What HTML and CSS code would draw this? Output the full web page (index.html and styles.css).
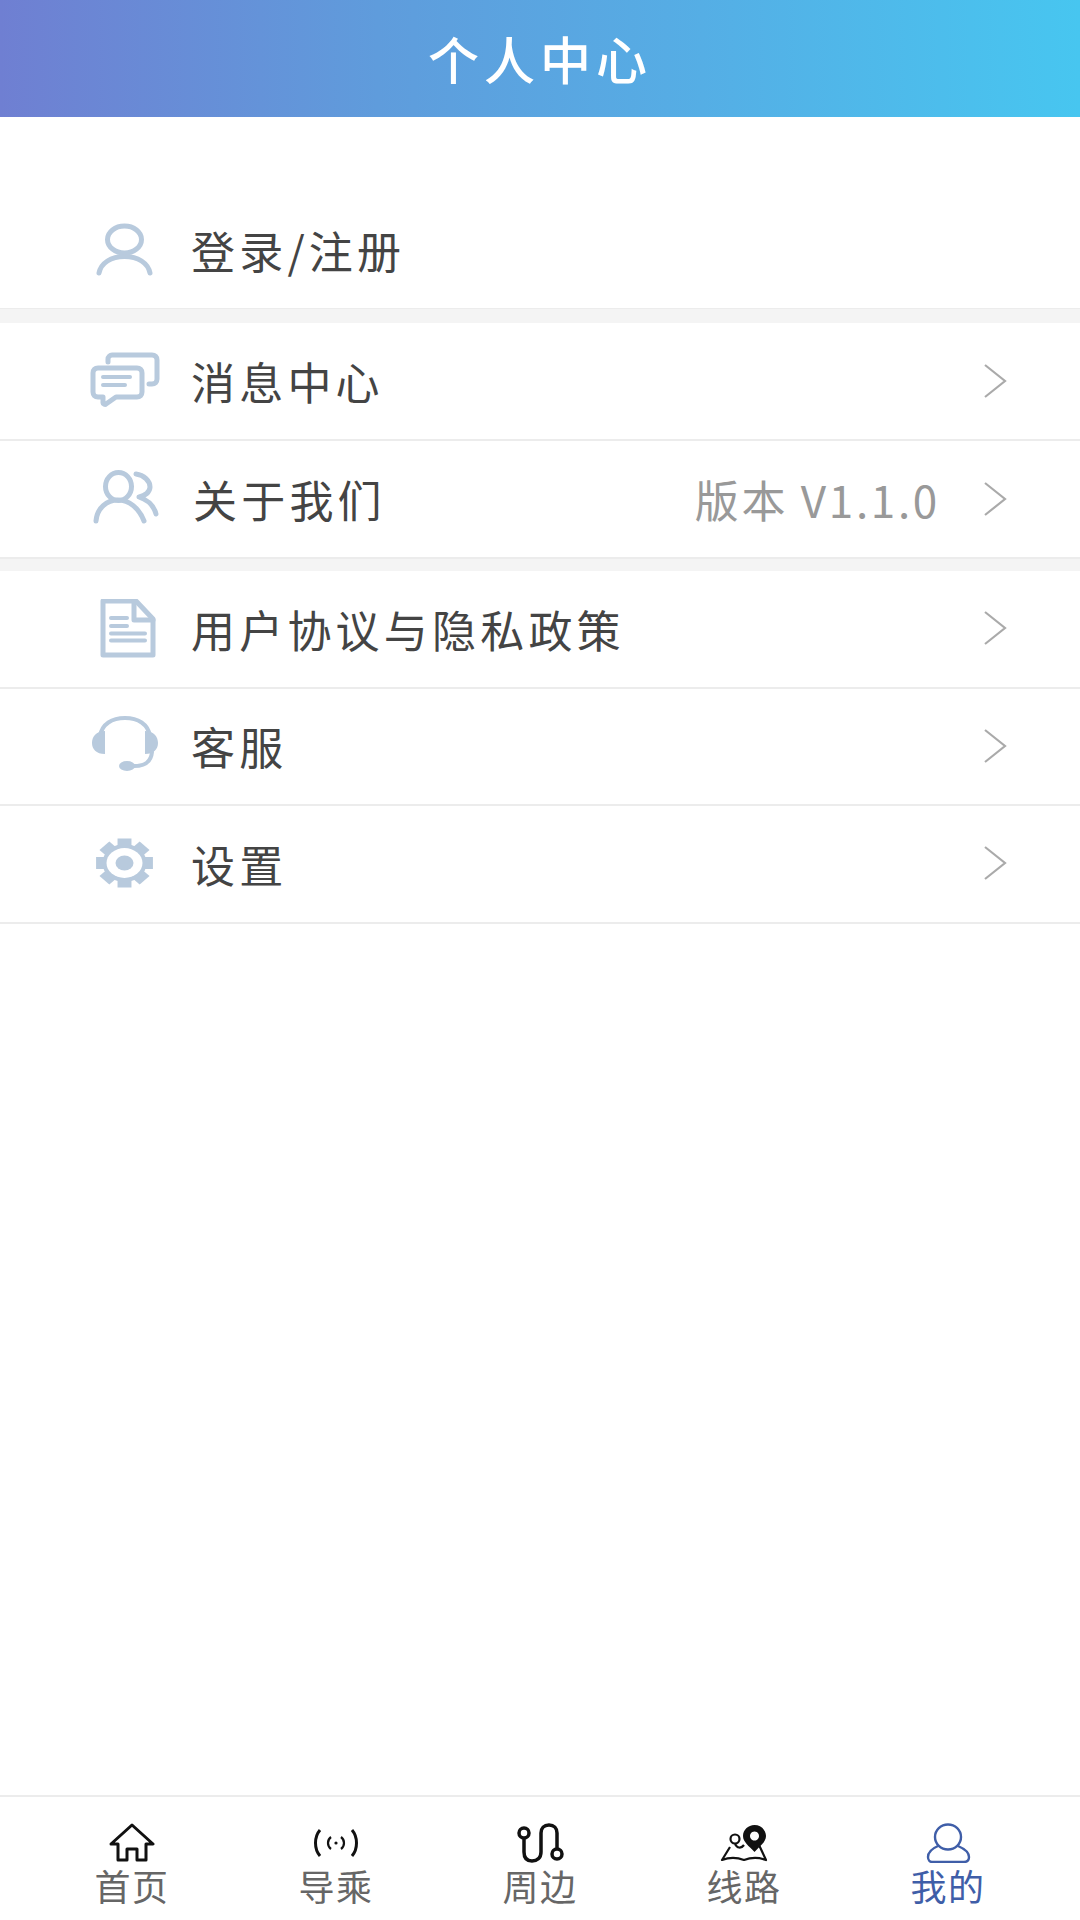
FILE: index.html
```html
<!DOCTYPE html>
<html lang="zh-CN">
<head>
    <meta charset="UTF-8">
    <meta name="viewport" content="width=device-width, initial-scale=1.0">
    <title>个人中心</title>
    <link rel="stylesheet" href="styles.css">
</head>
<body>
    <div class="page">
        <header class="header">个人中心</header>

        <main class="content">
            <div class="login">
                <svg class="icon" viewBox="0 0 72 60"><ellipse cx="34.5" cy="19.5" rx="17" ry="13.5"/><path d="M9 53C11 43 21 36.500 34.5 36.500S58 43 60 53"/></svg>
                <span class="title">登录/注册</span>
            </div>

            <div class="group group-top">
                <div class="row">
                    <svg class="icon" viewBox="0 0 72 60"><path d="M18 11V8c0-2 2-4 4-4h40c3 0 5 2 5 5v19c0 3-2 5-5 5h-3"/><path d="M8 17h39c3 0 5 2 5 5v19c0 3-2 5-5 5H26l-10 7c-1 1-3 0-3-1v-6H8c-3 0-5-2-5-5V22c0-3 2-5 5-5z"/><path class="thin" d="M13 26h27M13 34h22"/></svg>
                    <span class="title">消息中心</span>
                    <svg class="arrow" viewBox="0 0 24 36"><path d="M2 2l20 16L2 34"/></svg>
                </div>
                <div class="row">
                    <svg class="icon" viewBox="0 0 72 60"><ellipse cx="28.5" cy="17.5" rx="13" ry="14"/><path d="M6 52C7 39 17 31 28 31S49 39 54 52"/><path d="M46 5C54 6 60 12 60 18 60 23 55 27 49 28 58 31 64 37 66 45"/></svg>
                    <span class="title about">关于我们</span>
                    <span class="version">版本 V1.1.0</span>
                    <svg class="arrow" viewBox="0 0 24 36"><path d="M2 2l20 16L2 34"/></svg>
                </div>
            </div>

            <div class="group">
                <div class="row">
                    <svg class="icon" viewBox="0 0 72 60"><path d="M13 2h33l17 18v36H13z"/><path d="M44 2v19h19"/><path class="thin" d="M21 19h16M21 27h16M21 34.500h34M21 41.500h34"/></svg>
                    <span class="title">用户协议与隐私政策</span>
                    <svg class="arrow" viewBox="0 0 24 36"><path d="M2 2l20 16L2 34"/></svg>
                </div>
                <div class="row">
                    <svg class="icon" viewBox="0 0 72 60"><path class="thin" d="M10 20C12 8 22 2 35 2S58 8 60 20"/><path class="solid" d="M15 15v23C6 38 2 33 2 27s4-12 13-12zM55 15v23c9 0 13-5 13-11s-4-12-13-12z"/><path class="thin" d="M62 36C61 46 55 50 44 50"/><ellipse class="solid" cx="37" cy="50" rx="8" ry="5"/></svg>
                    <span class="title">客服</span>
                    <svg class="arrow" viewBox="0 0 24 36"><path d="M2 2l20 16L2 34"/></svg>
                </div>
                <div class="row">
                    <svg class="icon" viewBox="0 0 72 60">
                        <g class="solid" transform="translate(34.500 29) scale(1.16 1)">
                            <circle r="19"/>
                            <rect x="-6" y="-24.500" width="12" height="49"/>
                            <rect x="-6" y="-24.500" width="12" height="49" transform="rotate(45)"/>
                            <rect x="-6" y="-24.500" width="12" height="49" transform="rotate(90)"/>
                            <rect x="-6" y="-24.500" width="12" height="49" transform="rotate(135)"/>
                        </g>
                        <ellipse class="hole" cx="34.500" cy="29" rx="18" ry="15"/>
                        <ellipse class="solid" cx="34.500" cy="29" rx="9" ry="7.500"/>
                    </svg>
                    <span class="title">设置</span>
                    <svg class="arrow" viewBox="0 0 24 36"><path d="M2 2l20 16L2 34"/></svg>
                </div>
            </div>
        </main>

        <nav class="tabbar">
            <div class="tab">
                <svg class="tab-icon" viewBox="0 0 50 40"><path d="M11 21H4L25 2l21 19h-7v16H30V26H20v11H11z"/></svg>
                <span class="tab-label">首页</span>
            </div>
            <div class="tab">
                <svg class="tab-icon" viewBox="0 0 50 40"><path d="M9 7C3 14 3 26 9 33M41 7C47 14 47 26 41 33"/><path class="fine" d="M20 14C16 17 16 23 20 26M30 14C34 17 34 23 30 26"/><circle class="dot" cx="25" cy="20" r="1.600"/></svg>
                <span class="tab-label">导乘</span>
            </div>
            <div class="tab">
                <svg class="tab-icon route" viewBox="0 0 50 40"><circle cx="9" cy="10" r="5"/><circle cx="42" cy="31" r="5"/><path d="M9 15V29C9 35 12 38 17 38S26 35 26 29V10C26 5 29 2 34 2S42 5 42 10V26"/></svg>
                <span class="tab-label">周边</span>
            </div>
            <div class="tab">
                <svg class="tab-icon" viewBox="0 0 50 40"><path class="fine" d="M11 24L3 37C11 34 17 34 25 37 33 34 39 34 47 37L40 22"/><circle class="fine" cx="16" cy="16" r="4.500"/><path class="fine" d="M16 21C18 25 22 26 25 22"/><path class="dot" fill-rule="evenodd" d="M35.500 2C42 2 47 7 47 13 47 19 41 23 35.500 29 30 23 24 19 24 13 24 7 29 2 35.500 2zM35.500 8.500a4.500 4.500 0 1 0 .01 0z"/></svg>
                <span class="tab-label">线路</span>
            </div>
            <div class="tab active">
                <svg class="tab-icon" viewBox="0 0 50 40"><ellipse cx="25" cy="14" rx="13" ry="12.500"/><path d="M15 23C8 26 5 30 5 34 5 37 7 39 9 39H41C44 39 46 37 46 34 46 30 42 26 35 23"/></svg>
                <span class="tab-label">我的</span>
            </div>
        </nav>
    </div>
</body>
</html>
```

FILE: styles.css
```css
body {
    font-family: "Noto Sans CJK SC", "Liberation Sans", sans-serif;
    margin: 0;
    padding: 0;
    background-color: #fff;
}

.page {
    display: flex;
    flex-direction: column;
    width: 1080px;
    height: 1920px;
    overflow: hidden;
}

.header {
    height: 117px;
    line-height: 117px;
    flex-shrink: 0;
    text-align: center;
    color: #fff;
    font-size: 51px;
    font-weight: 500;
    letter-spacing: 5px;
    background: linear-gradient(90deg, #6f7fd2, #5f9cdc 35%, #55aee5 65%, #47c6f0);
}

.content {
    flex: 1;
}

.login {
    display: flex;
    align-items: center;
    height: 192px;
    box-sizing: border-box;
    padding-left: 90px;
    padding-top: 75px;
    border-bottom: 1px solid #ececec;
}

.group {
    border-top: 12px solid #f4f4f4;
}

.group-top {
    border-top-width: 14px;
}

.row {
    display: flex;
    align-items: center;
    height: 117.500px;
    box-sizing: border-box;
    padding-left: 90px;
    padding-right: 73px;
    border-bottom: 2px solid #ececec;
}

.group-top .row {
    height: 118px;
}

.icon {
    width: 72px;
    height: 60px;
    margin-right: 29px;
    flex-shrink: 0;
    fill: none;
    stroke: #b8cadd;
    stroke-width: 5;
    stroke-linecap: round;
    stroke-linejoin: round;
}

.icon .thin {
    stroke-width: 4;
}

.icon .solid {
    fill: #b8cadd;
    stroke: none;
}

.icon .hole {
    fill: #fff;
    stroke: none;
}

.title {
    flex: 1;
    font-size: 44px;
    letter-spacing: 4.200px;
    color: #444;
}

.about {
    margin-left: 2px;
}

.version {
    font-size: 44px;
    color: #999;
    letter-spacing: 2.700px;
    margin-right: 43px;
}

.arrow {
    width: 24px;
    height: 36px;
    margin-bottom: 1px;
    fill: none;
    stroke: #aaa;
    stroke-width: 2.200;
}

.tabbar {
    display: flex;
    height: 125px;
    flex-shrink: 0;
    box-sizing: border-box;
    padding: 0 30px;
    border-top: 2px solid #ececec;
}

.tab {
    flex: 1;
    display: flex;
    flex-direction: column;
    align-items: center;
    padding-top: 26px;
    color: #666;
}

.tab-icon {
    height: 40px;
    width: 50px;
    fill: none;
    stroke: #111;
    stroke-width: 3;
    stroke-linejoin: round;
}

.tab-icon .fine {
    stroke-width: 2.200;
}

.tab-icon .dot {
    fill: #111;
    stroke: none;
}

.tab-icon.route {
    stroke-width: 3.500;
}

.tab-label {
    margin-top: 4px;
    font-size: 36px;
    line-height: 36px;
    letter-spacing: 1.500px;
}

.tab.active {
    color: #3f5ea8;
}

.tab.active .tab-icon {
    stroke: #3f5ea8;
    stroke-width: 2.400;
}
```
